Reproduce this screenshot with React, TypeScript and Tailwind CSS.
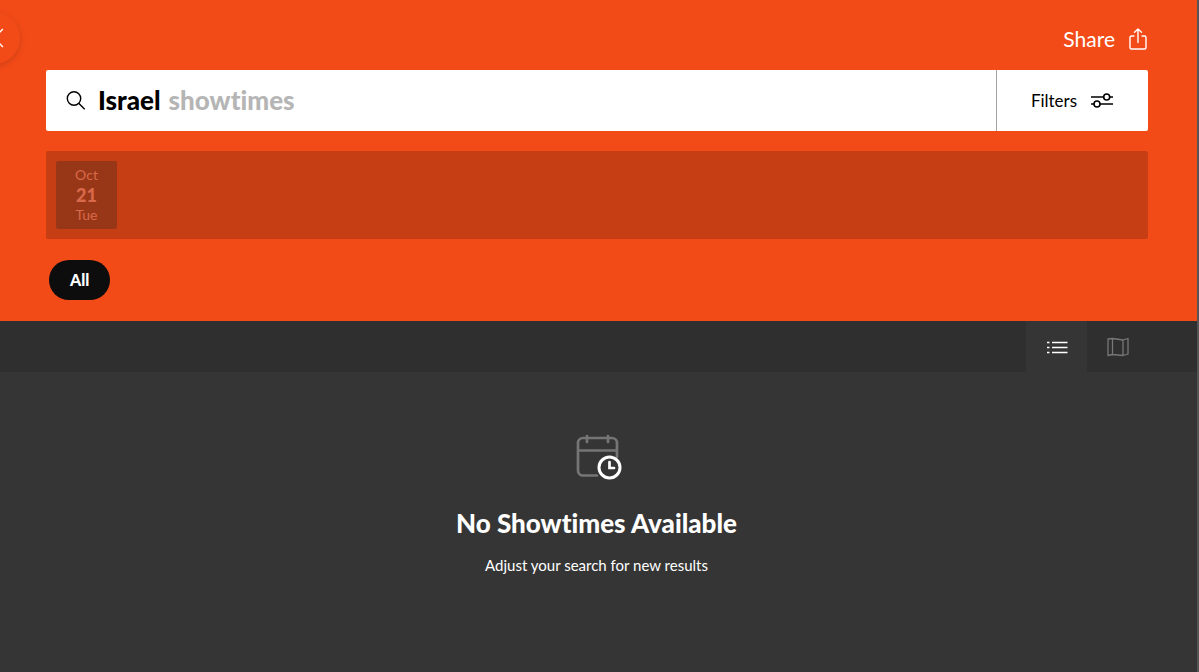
type ShowDate = {
  month: string;
  day: string;
  weekday: string;
};

const dates: ShowDate[] = [{ month: "Oct", day: "21", weekday: "Tue" }];

export default function App() {
  return (
    <div className="relative flex min-h-screen flex-col overflow-hidden border-r-2 border-[#555] bg-[#353535] font-['Lato','Liberation_Sans',sans-serif] text-white [font-variant-ligatures:none]">
      <CloseButton />
      <header className="bg-[#f24b18] pr-[49px] pl-[46px] pt-[23px] pb-[21px]">
        <div className="flex justify-end">
          <button className="flex h-8 items-center gap-[14px] text-[21px] leading-8">
            Share
            <ShareIcon />
          </button>
        </div>
        <SearchBar />
        <div className="mt-5 flex rounded-xs bg-[#c53e14] p-[10px]">
          {dates.map((date) => (
            <DateButton key={date.day} {...date} />
          ))}
        </div>
        <button className="mt-[21px] ml-[3px] block h-10 rounded-full bg-[#0d0d0d] px-[21px] text-[16px] font-black">
          All
        </button>
      </header>
      <nav className="flex h-[51px] justify-end bg-[#2f2f2f] pr-[49px]">
        <button
          aria-label="List view"
          className="flex w-[61px] items-center justify-center bg-[#353535]"
        >
          <ListIcon />
        </button>
        <button
          aria-label="Map view"
          className="flex w-[61px] items-center justify-center text-[#777]"
        >
          <MapIcon />
        </button>
      </nav>
      <main className="flex flex-col items-center pt-[62px] text-center">
        <CalendarIcon />
        <h1 className="mt-[27px] pr-1 text-[26px] leading-8 font-black">
          No Showtimes Available
        </h1>
        <p className="mt-[14px] pr-1 text-[15px] leading-6">
          Adjust your search for new results
        </p>
      </main>
    </div>
  );
}

const SearchBar = () => (
  <div className="mt-[15px] flex h-[61px] rounded-xs bg-white text-black">
    <label className="flex flex-1 items-center pl-5 text-[26px] font-black">
      <SearchIcon />
      <input
        type="text"
        aria-label="Location"
        defaultValue="Israel"
        className="ml-3 field-sizing-content outline-none"
      />
      <span className="ml-2 text-[#b5b5b5]">showtimes</span>
    </label>
    <button className="flex w-[152px] items-center justify-center gap-[13px] border-l border-[#a5a5a5] text-[17px]">
      Filters
      <FiltersIcon />
    </button>
  </div>
);

const DateButton = ({ month, day, weekday }: ShowDate) => (
  <button className="flex h-[68px] w-[61px] flex-col items-center justify-center rounded-xs bg-[#983718] text-[14px] leading-5 text-[#d9694a]">
    <span>{month}</span>
    <span className="text-[18px] font-black">{day}</span>
    <span>{weekday}</span>
  </button>
);

const CloseButton = () => (
  <button
    aria-label="Close"
    className="absolute top-3 -left-8 flex size-[52px] items-center justify-center rounded-full bg-[#f24b18] shadow-[0_2px_6px_rgba(0,0,0,0.15)]"
  >
    <svg width="20" height="20" viewBox="0 0 18 18" fill="none" stroke="currentColor" strokeWidth="1.3">
      <path d="M1 1l16 16M17 1L1 17" />
    </svg>
  </button>
);

const ShareIcon = () => (
  <svg width="19" height="22" viewBox="0 0 19 22" fill="none" stroke="currentColor" strokeWidth="1.4" strokeLinecap="round" strokeLinejoin="round">
    <path d="M5 8H2.5C1.6 8 1 8.6 1 9.500v10c0 .9.6 1.500 1.500 1.500h13c.9 0 1.500-.6 1.500-1.500v-10C17 8.600 16.400 8 15.500 8H13M9 14.500V1M5.500 4.300L9 1l3.500 3.300" />
  </svg>
);

const SearchIcon = () => (
  <svg width="20" height="20" viewBox="0 0 20 20" fill="none" stroke="currentColor" strokeWidth="1.4">
    <circle cx="8" cy="7.5" r="6.7" />
    <path d="M12.700 12.200l6 6" />
  </svg>
);

const FiltersIcon = () => (
  <svg width="24" height="16" viewBox="0 0 24 16" fill="none" stroke="currentColor" strokeWidth="1.6">
    <path d="M1 4h12.500M20 4h3M1 11h3M10 11h13" />
    <circle cx="16.7" cy="4" r="3" />
    <circle cx="7" cy="11" r="3" />
  </svg>
);

const ListIcon = () => (
  <svg width="22" height="14" viewBox="0 0 22 14" fill="none" stroke="currentColor" strokeWidth="1.3">
    <path d="M1 2.500h2.500M6 2.500h15.500M1 7.500h2.500M6 7.500h15.500M1 12.500h2.500M6 12.500h15.500" />
  </svg>
);

const MapIcon = () => (
  <svg width="22" height="20" viewBox="0 0 22 20" fill="none" stroke="currentColor" strokeWidth="1.3" strokeLinejoin="round">
    <path d="M1 2l4.500-.5L16 3l5-1.500v15.500L16 18.500 5.500 17.500 1 18.500zM5.500 1.500v16M16 3v15.500" />
  </svg>
);

const CalendarIcon = () => (
  <svg width="46" height="46" viewBox="0 0 46 46" fill="none" strokeLinecap="round">
    <g stroke="#757575" strokeWidth="2.7">
      <path d="M21 41.500H7a5 5 0 0 1-5-5V9a5 5 0 0 1 5-5h29a5 5 0 0 1 5 5v14M2 16.500h39M11 2v6M32 2v6" />
    </g>
    <circle cx="33.5" cy="33.5" r="10.5" fill="#353535" stroke="white" strokeWidth="3" />
    <path d="M33.500 28v6h4.500" stroke="white" strokeWidth="2.7" />
  </svg>
);
